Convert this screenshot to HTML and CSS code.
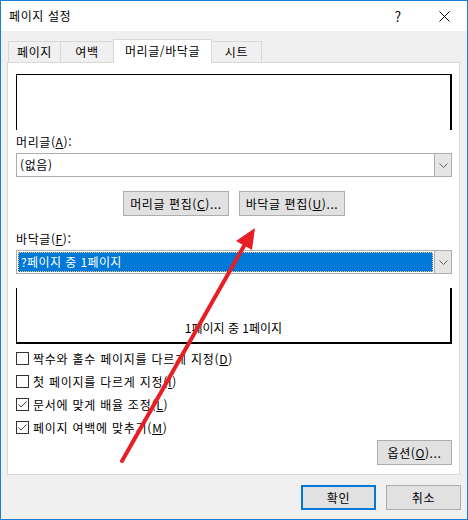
FILE: index.html
```html
<!DOCTYPE html>
<html lang="ko">
<head>
<meta charset="utf-8">
<title>페이지 설정</title>
<link rel="stylesheet" href="styles.css">
</head>
<body>
<div class="window">
  <div class="titlebar">
    <span class="title">페이지 설정</span>
    <span class="tb-btn help">?</span>
    <span class="tb-btn close"><svg width="11" height="11" viewBox="0 0 11 11"><path d="M0.5 0.5 L10.5 10.5 M10.5 0.5 L0.5 10.5" stroke="#000" stroke-width="1" fill="none"/></svg></span>
  </div>
  <div class="client">
    <div class="tabs">
      <div class="tab t1">페이지</div>
      <div class="tab t2">여백</div>
      <div class="tab selected">머리글/바닥글</div>
      <div class="tab t4">시트</div>
    </div>
    <div class="panel">
      <div class="preview header-preview"></div>
      <div class="label">머리글(<u>A</u>):</div>
      <div class="combo">
        <span class="combo-text">(없음)</span>
        <span class="drop"><svg width="9" height="5" viewBox="0 0 9 5"><path d="M0.5 0.5 L4.5 4.5 L8.5 0.5" stroke="#606060" stroke-width="1" fill="none"/></svg></span>
      </div>
      <div class="edit-row">
        <div class="btn edit">머리글 편집(<u>C</u>)...</div>
        <div class="btn edit">바닥글 편집(<u>U</u>)...</div>
      </div>
      <div class="label label2">바닥글(<u>F</u>):</div>
      <div class="combo">
        <span class="combo-text sel-wrap"><span class="sel">?페이지 중 1페이지</span></span>
        <span class="drop"><svg width="9" height="5" viewBox="0 0 9 5"><path d="M0.5 0.5 L4.5 4.5 L8.5 0.5" stroke="#606060" stroke-width="1" fill="none"/></svg></span>
      </div>
      <div class="preview footer-preview"><span>1페이지 중 1페이지</span></div>
      <div class="checks">
        <div class="check-row"><span class="box"></span><span>짝수와 홀수 페이지를 다르게 지정(<u>D</u>)</span></div>
        <div class="check-row"><span class="box"></span><span>첫 페이지를 다르게 지정(<u>I</u>)</span></div>
        <div class="check-row"><span class="box"><svg width="11" height="11" viewBox="0 0 11 11"><path d="M1.5 5.5 L4 8 L9.5 2.5" stroke="#444" stroke-width="1" fill="none"/></svg></span><span>문서에 맞게 배율 조정(<u>L</u>)</span></div>
        <div class="check-row"><span class="box"><svg width="11" height="11" viewBox="0 0 11 11"><path d="M1.5 5.5 L4 8 L9.5 2.5" stroke="#444" stroke-width="1" fill="none"/></svg></span><span>페이지 여백에 맞추기(<u>M</u>)</span></div>
      </div>
      <div class="options-row">
        <div class="btn options">옵션(<u>O</u>)...</div>
      </div>
    </div>
    <div class="dialog-buttons">
      <div class="btn dlg default">확인</div>
      <div class="btn dlg">취소</div>
    </div>
  </div>
  <svg class="arrow" width="468" height="520" viewBox="0 0 468 520">
    <line x1="122" y1="461" x2="244" y2="246" stroke="#e81e25" stroke-width="4" stroke-linecap="round"/>
    <polygon points="255,228 236,241 252,250" fill="#e81e25"/>
  </svg>
</div>
</body>
</html>
```

FILE: styles.css
```css
html, body {
  margin: 0;
  padding: 0;
}
body {
  font-family: "Noto Sans CJK KR", "Noto Sans", sans-serif;
  font-size: 12px;
  letter-spacing: 0.6px;
  color: #000;
  background: #fff;
}
.window {
  position: relative;
  width: 468px;
  height: 520px;
  box-sizing: border-box;
  border: 1px solid #1a7ed4;
  background: #f0f0f0;
  display: flex;
  flex-direction: column;
}
.titlebar {
  height: 30px;
  background: #fff;
  display: flex;
  align-items: center;
  padding-left: 8px;
}
.title {
  flex: 1;
  line-height: 16px;
}
.tb-btn {
  width: 46px;
  height: 30px;
  display: flex;
  align-items: center;
  justify-content: center;
}
.help {
  font-size: 14px;
}
.client {
  flex: 1;
  display: flex;
  flex-direction: column;
}
.tabs {
  display: flex;
  align-items: flex-end;
  padding: 8px 0 0 7px;
  height: 23px;
}
.tab {
  height: 21px;
  box-sizing: border-box;
  border-top: 1px solid #d9d9d9;
  background: #f0f0f0;
  display: flex;
  align-items: center;
  justify-content: center;
  line-height: 16px;
}
.t1 {
  width: 53px;
  border-left: 1px solid #d9d9d9;
  border-right: 1px solid #d9d9d9;
}
.t2 {
  width: 52px;
}
.tab.selected {
  width: 99px;
  height: 24px;
  margin-bottom: -1px;
  background: #fff;
  border-left: 1px solid #d9d9d9;
  border-right: 1px solid #d9d9d9;
  position: relative;
  z-index: 1;
  padding-bottom: 1px;
}
.t4 {
  width: 50px;
  border-right: 1px solid #d9d9d9;
}
.panel {
  margin: 0 7px 0 6px;
  height: 413px;
  box-sizing: border-box;
  border: 1px solid #d9d9d9;
  background: #fff;
  padding: 11px 7px 10px 8px;
  display: flex;
  flex-direction: column;
}
.preview {
  height: 56px;
  box-sizing: border-box;
  flex: none;
}
.header-preview {
  border-top: 1px solid #000;
  border-left: 1px solid #000;
  border-right: 2px solid #000;
}
.footer-preview {
  margin-top: 14px;
  border-left: 1px solid #000;
  border-right: 2px solid #000;
  border-bottom: 2px solid #000;
  display: flex;
  align-items: flex-end;
  justify-content: center;
  padding-bottom: 6px;
  line-height: 16px;
  letter-spacing: 0;
}
.label {
  height: 15px;
  line-height: 15px;
  margin: 4px 0 4px;
}
.label2 {
  margin-top: 15px;
}
.combo {
  height: 24px;
  box-sizing: border-box;
  border: 1px solid #adadad;
  display: flex;
  align-items: stretch;
  flex: none;
}
.combo-text {
  flex: 1;
  padding-left: 3px;
  display: flex;
  align-items: center;
  line-height: 16px;
}
.sel-wrap {
  padding: 1px 0 1px 1px;
  align-items: stretch;
  letter-spacing: 0.4px;
}
.sel {
  flex: 1;
  background: #0078d7;
  color: #fff;
  border: 1px dotted #f6c37a;
  padding-left: 2px;
  display: flex;
  align-items: center;
  margin-right: 1px;
}
.drop {
  box-sizing: border-box;
  border: 1px solid #adadad;
  background: #e5e5e5;
  display: flex;
  align-items: center;
  justify-content: center;
  margin: -1px -1px -1px 0;
  width: 18px;
}
.btn {
  box-sizing: border-box;
  height: 25px;
  border: 1px solid #adadad;
  background: #e1e1e1;
  display: flex;
  align-items: center;
  justify-content: center;
  line-height: 16px;
}
.edit-row {
  margin-top: 14px;
  display: flex;
  justify-content: center;
  gap: 10px;
}
.edit {
  width: 106px;
}
.checks {
  margin-top: 3px;
  display: flex;
  flex-direction: column;
}
.check-row {
  height: 23px;
  display: flex;
  align-items: center;
  gap: 4px;
  line-height: 16px;
  letter-spacing: 0.75px;
}
.box {
  width: 13px;
  height: 13px;
  box-sizing: border-box;
  border: 1px solid #333;
  background: #fff;
  display: flex;
  align-items: center;
  justify-content: center;
  flex: none;
}
.options-row {
  margin-top: 1px;
  display: flex;
  justify-content: flex-end;
}
.options {
  width: 75px;
}
.dialog-buttons {
  margin-top: 10px;
  display: flex;
  justify-content: flex-end;
  gap: 10px;
  padding-right: 6px;
}
.dlg {
  width: 75px;
}
.dlg.default {
  border: 2px solid #0078d7;
}
.arrow {
  position: absolute;
  left: -1px;
  top: -1px;
  pointer-events: none;
}
u {
  text-decoration: underline;
  text-underline-offset: 1px;
}
```
